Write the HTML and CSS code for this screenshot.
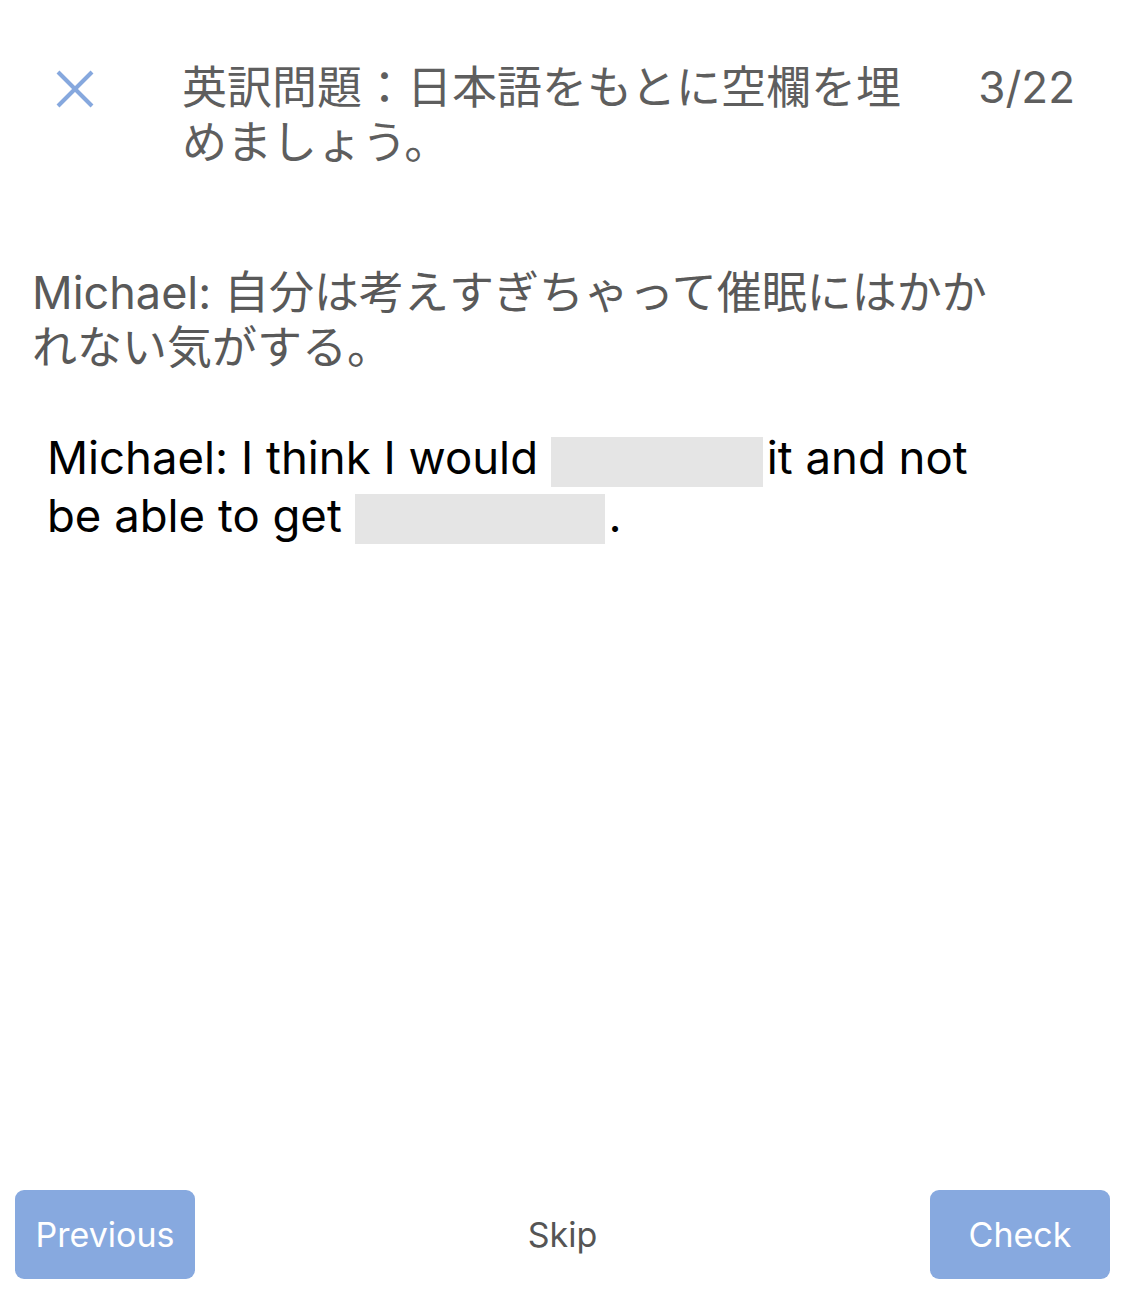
FILE: index.html
```html
<!DOCTYPE html>
<html lang="ja">

<head>
  <meta charset="UTF-8">
  <meta name="viewport" content="width=device-width, initial-scale=1.0">
  <title>英訳問題</title>

  <link rel="stylesheet" href="styles.css">
</head>

<body>
  <div id="screen">
    <header class="header">
      <button class="close" aria-label="閉じる">
        <svg viewBox="0 0 38 38" width="38" height="38">
          <line x1="2" y1="2" x2="36" y2="36" />
          <line x1="36" y1="2" x2="2" y2="36" />
        </svg>
      </button>
      <h1 class="title">英訳問題：日本語をもとに空欄を埋めましょう。</h1>
      <span class="count">3/22</span>
    </header>

    <main class="question">
      <p class="japanese">Michael: 自分は考えすぎちゃって催眠にはかかれない気がする。</p>
      <p class="english">Michael: I think I would <span class="blank"></span>it and not be able to get <span class="blank wide"></span>.</p>
    </main>

    <footer class="footer">
      <button class="navButton">Previous</button>
      <button class="skip">Skip</button>
      <button class="navButton">Check</button>
    </footer>
  </div>
</body>

</html>
```

FILE: styles.css
```css
body {
  margin:0;
  background:#fff;
  font-family:Inter, "Noto Sans CJK JP", sans-serif;
}
#screen {
  width:1125px;
  height:1294px;
  display:flex;
  flex-direction:column;
}
button {
  font-family:inherit;
  border:none;
  background:none;
  padding:0;
  cursor:pointer;
}

/* header */
.header {
  display:flex;
  align-items:flex-start;
  padding:60px 50px 0 56px;
}
.close {
  width:38px;
  height:38px;
  margin-top:10px;
}
.close svg {
  display:block;
  stroke:#86a8de;
  stroke-width:4;
}
.title {
  width:740px;
  margin:0 0 0 88px;
  font-size:45px;
  font-weight:normal;
  line-height:55px;
  color:#5e5e5e;
}
.count {
  margin-left:auto;
  font-size:44px;
  line-height:55px;
  color:#5e5e5e;
}

/* question */
.question {
  flex:1;
  padding:95px 0 0 32px;
}
.japanese {
  width:985px;
  margin:0;
  font-size:45px;
  line-height:55px;
  color:#595959;
}
.english {
  width:945px;
  margin:54px 0 0;
  padding-left:15px;
  font-size:45.5px;
  line-height:57px;
  color:#000;
}
.blank {
  display:inline-block;
  width:212px;
  height:50px;
  margin-right:4px;
  background:#e5e5e5;
  vertical-align:middle;
}
.blank.wide {
  width:250px;
}

/* footer */
.footer {
  display:flex;
  justify-content:space-between;
  align-items:center;
  padding:0 15px 15px;
}
.navButton {
  width:180px;
  height:89px;
  border-radius:9px;
  background:#87a9df;
  color:#fff;
  font-size:34px;
}
.skip {
  font-size:34px;
  color:#555;
}
```
